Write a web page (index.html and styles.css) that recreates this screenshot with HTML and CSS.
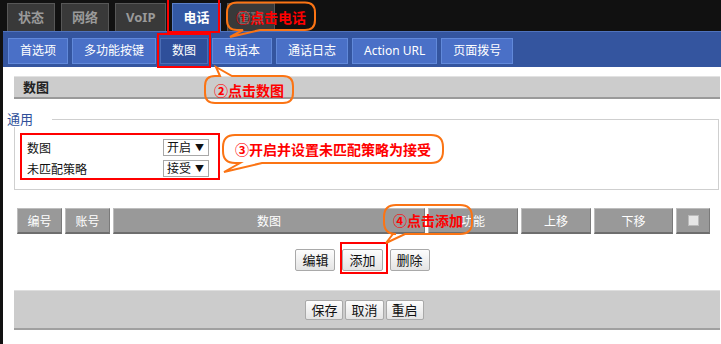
FILE: index.html
```html
<!DOCTYPE html>
<html lang="zh-CN">
<head>
  <meta charset="UTF-8">
  <title>电话 - 数图</title>
  <link rel="stylesheet" href="styles.css">
</head>
<body>
  <div class="page">
    <div class="topnav">
      <div class="ttab">状态</div>
      <div class="ttab">网络</div>
      <div class="ttab">VoIP</div>
      <div class="ttab active">电话</div>
      <div class="ttab dim">管理</div>
    </div>

    <div class="main">
      <div class="subnav">
        <div class="stab">首选项</div>
        <div class="stab">多功能按键</div>
        <div class="stab active">数图</div>
        <div class="stab">电话本</div>
        <div class="stab">通话日志</div>
        <div class="stab">Action URL</div>
        <div class="stab">页面拨号</div>
      </div>

      <div class="content">
        <div class="section-title">数图</div>

        <fieldset class="group">
          <legend>通用</legend>
          <div class="rows">
            <div class="row">
              <span class="lbl">数图</span>
              <span class="sel">开启<i>▼</i></span>
            </div>
            <div class="row">
              <span class="lbl">未匹配策略</span>
              <span class="sel">接受<i>▼</i></span>
            </div>
          </div>
        </fieldset>

        <div class="thead">
          <div class="th">编号</div>
          <div class="th">账号</div>
          <div class="th">数图</div>
          <div class="th">功能</div>
          <div class="th">上移</div>
          <div class="th">下移</div>
          <div class="th"><span class="chk"></span></div>
        </div>

        <div class="actions">
          <button class="btn">编辑</button>
          <button class="btn">添加</button>
          <button class="btn">删除</button>
        </div>

        <div class="footer">
          <button class="btn small">保存</button>
          <button class="btn small">取消</button>
          <button class="btn small">重启</button>
        </div>
      </div>
    </div>

    <!-- 标注 -->
    <div class="mark mark-tab"></div>
    <div class="mark mark-sub"></div>
    <div class="mark mark-rows"></div>
    <div class="mark mark-add"></div>

    <svg class="callouts" width="721" height="344" viewBox="0 0 721 344">
      <path d="M237 2.5H305Q315 2.5 315 12.5V20Q315 30 305 30H260L230 37L243 30H237Q227 30 227 20V12.5Q227 2.5 237 2.5Z"/>
      <path d="M215 76H220L216 67L232 76H283Q293 76 293 86V93Q293 103 283 103H215Q205 103 205 93V86Q205 76 215 76Z"/>
      <path d="M235 135H431Q443 135 443 147V151Q443 163 431 163H262L224 172L240 163H235Q223 163 223 151V147Q223 135 235 135Z"/>
      <path d="M396 205H460Q472 205 472 217V222Q472 234 460 234H405L386 243L393 234H396Q384 234 384 222V217Q384 205 396 205Z"/>
      <text x="271" y="17">①点击电话</text>
      <text x="249" y="90">②点击数图</text>
      <text x="333" y="149">③开启并设置未匹配策略为接受</text>
      <text x="428" y="220">④点击添加</text>
    </svg>
  </div>
</body>
</html>
```

FILE: styles.css
```css
* {
  box-sizing: border-box;
}
body {
  margin: 0;
  background: #111;
  font-family: "Noto Sans", "Noto Sans CJK SC", sans-serif;
  font-size: 12px;
}
.page {
  position: relative;
  width: 721px;
  height: 344px;
  overflow: hidden;
}

/* top navigation */
.topnav {
  display: flex;
  align-items: flex-end;
  gap: 6px;
  height: 31px;
  padding-left: 7px;
}
.ttab {
  height: 28px;
  line-height: 27px;
  padding: 0 10px;
  text-align: center;
  background: #393939;
  border: 1px solid #575757;
  border-bottom: none;
  color: #9a9a9a;
  font-weight: bold;
  font-size: 13px;
}
.ttab.active {
  background: #3358a4;
  border-color: #5b7fc8;
  color: #fff;
}
.ttab.dim {
  color: #6a6a6a;
}

.main {
  margin-left: 3px;
  height: 313px;
  background: #fff;
}

/* sub navigation */
.subnav {
  display: flex;
  gap: 4px;
  height: 36px;
  padding: 6px 0 0 5px;
  background: #34559f;
  border-top: 1px solid #5073bd;
}
.stab {
  height: 26px;
  line-height: 24px;
  padding: 0 11px;
  background: #4a70c7;
  border: 1px solid #6189da;
  color: #fff;
  font-size: 12px;
  white-space: nowrap;
}
.stab.active {
  background: #2f4f9a;
  border-color: #4c6db5;
}

.content {
  padding: 9px 1px 0 11px;
}
.section-title {
  height: 23px;
  line-height: 21px;
  padding-left: 9px;
  background: #ccc;
  border-top: 1px solid #e2e2e2;
  border-bottom: 2px solid #9a9a9a;
  font-weight: bold;
  font-size: 13px;
  color: #222;
}

/* general group */
.group {
  margin: 12px 1px 0 0;
  padding: 0;
  border: 1px solid #cfcfcf;
}
.group legend {
  margin-left: -8px;
  padding: 0 19px 0 0;
  line-height: 16px;
  background: #fff;
  color: #2f4f99;
  font-size: 13px;
}
.rows {
  display: flex;
  flex-direction: column;
  gap: 4px;
  padding: 12px 0 12px 12px;
}
.row {
  display: flex;
  align-items: center;
  height: 17px;
}
.lbl {
  width: 136px;
  color: #111;
}
.sel {
  display: flex;
  justify-content: space-between;
  align-items: center;
  width: 46px;
  height: 17px;
  padding: 0 4px 0 3px;
  border: 1px solid #a8a8a8;
  background: #fff;
  color: #111;
  line-height: 15px;
}
.sel i {
  font-style: normal;
  font-size: 9px;
}

/* table header */
.thead {
  display: grid;
  grid-template-columns: 45px 45px 312px 90px 70px 79px 34px;
  gap: 3px;
  margin: 18px 0 0 3px;
}
.th {
  display: flex;
  align-items: center;
  justify-content: center;
  height: 26px;
  background: #999;
  border-top: 1px solid #bdbdbd;
  border-left: 1px solid #bdbdbd;
  border-right: 1px solid #7a7a7a;
  border-bottom: 2px solid #6e6e6e;
  color: #fff;
  font-size: 12px;
}
.chk {
  width: 11px;
  height: 11px;
  background: #e6e6e6;
  border: 1px solid #bbb;
}

/* buttons */
.actions {
  display: flex;
  justify-content: center;
  gap: 7px;
  margin: 15px 9px 0 0;
}
.btn {
  height: 22px;
  padding: 0 6px;
  background: linear-gradient(#fdfdfd, #e4e4e4);
  border: 1px solid #a9a9a9;
  border-radius: 2px;
  font-family: inherit;
  font-size: 13px;
  color: #111;
  line-height: 20px;
}
.btn.small {
  height: 20px;
  line-height: 18px;
  padding: 0 5px;
}
.footer {
  display: flex;
  justify-content: center;
  align-items: center;
  gap: 2px;
  height: 40px;
  margin-top: 19px;
  padding-right: 5px;
  background: #ccc;
  border-top: 1px solid #dedede;
  border-bottom: 2px solid #a0a0a0;
}

/* annotations */
.mark {
  position: absolute;
  border: 2.5px solid #f00;
}
.mark-tab {
  left: 167px;
  top: -2px;
  width: 53px;
  height: 35px;
}
.mark-sub {
  left: 157px;
  top: 33px;
  width: 54px;
  height: 35px;
}
.mark-rows {
  left: 20px;
  top: 133px;
  width: 200px;
  height: 47px;
}
.mark-add {
  left: 340px;
  top: 242px;
  width: 48px;
  height: 32px;
}
.callouts {
  position: absolute;
  left: 0;
  top: 0;
  pointer-events: none;
}
.callouts path {
  fill: none;
  stroke: #fb7414;
  stroke-width: 2;
}
.callouts text {
  fill: #f00;
  font-family: "Noto Sans CJK SC", sans-serif;
  font-weight: bold;
  font-size: 14px;
  text-anchor: middle;
  dominant-baseline: central;
}
```
